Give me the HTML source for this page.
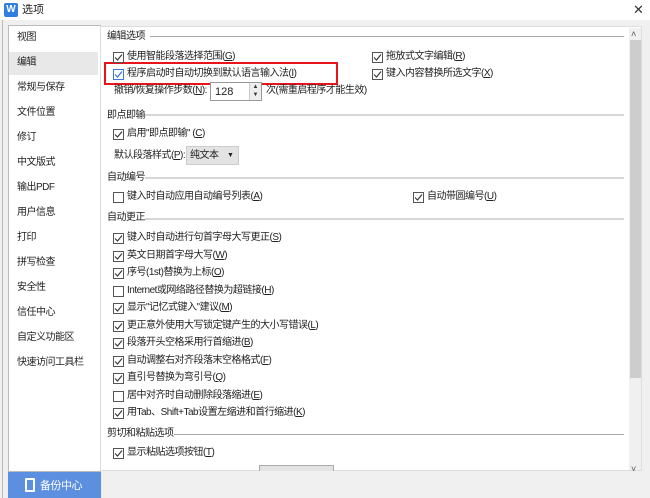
<!DOCTYPE html>
<html><head><meta charset="utf-8"><style>
*{margin:0;padding:0;box-sizing:border-box}
body{width:650px;height:498px;overflow:hidden;background:#f0f0f0;font-family:"Liberation Sans","Noto Sans CJK SC",sans-serif;font-size:10px;letter-spacing:-0.5px;color:#222;position:relative}
.a{position:absolute;white-space:nowrap;line-height:14px}
.cb{position:absolute;width:11px;height:11px;border:1px solid #555;background:#fff}
.cb svg{position:absolute;left:0;top:0}
.hl{position:absolute;height:2px;background:#d6d6d6}
</style></head><body>
<div style="position:absolute;left:0;top:0;width:650px;height:20px;background:#fff"></div>
<div style="position:absolute;left:4px;top:3px;width:14px;height:14px;background:#2f7fe0;border-radius:2px;color:#fff;font-size:10px;font-weight:bold;text-align:center;line-height:14px;letter-spacing:0">W</div>
<div class="a" style="left:22px;top:3px;font-size:11px;letter-spacing:0">选项</div>
<div class="a" style="left:633px;top:3px;font-size:13px;color:#333;letter-spacing:0">✕</div>
<div style="position:absolute;left:2px;top:20px;width:1px;height:478px;background:#bbb"></div>
<div style="position:absolute;left:8px;top:25px;width:93px;height:447px;background:#fff;border:1px solid #bbb"></div>
<div style="position:absolute;left:9px;top:52px;width:89px;height:23px;background:#e8e8e8"></div>
<div class="a" style="left:17px;top:31px">视图</div>
<div class="a" style="left:17px;top:56px">编辑</div>
<div class="a" style="left:17px;top:81px">常规与保存</div>
<div class="a" style="left:17px;top:106px">文件位置</div>
<div class="a" style="left:17px;top:131px">修订</div>
<div class="a" style="left:17px;top:156px">中文版式</div>
<div class="a" style="left:17px;top:181px">输出PDF</div>
<div class="a" style="left:17px;top:206px">用户信息</div>
<div class="a" style="left:17px;top:231px">打印</div>
<div class="a" style="left:17px;top:256px">拼写检查</div>
<div class="a" style="left:17px;top:281px">安全性</div>
<div class="a" style="left:17px;top:306px">信任中心</div>
<div class="a" style="left:17px;top:331px">自定义功能区</div>
<div class="a" style="left:17px;top:356px">快速访问工具栏</div>
<div style="position:absolute;left:8px;top:472px;width:93px;height:26px;background:#5c8fe0"></div>
<div style="position:absolute;left:25px;top:478px;width:10px;height:14px;border:2px solid #fff;border-radius:1px"></div>
<div class="a" style="left:40px;top:479px;color:#fff;font-size:11px">备份中心</div>
<div style="position:absolute;left:100px;top:26px;width:542px;height:445px;background:#fff;border:1px solid #ddd"></div>
<div style="position:absolute;left:629px;top:28px;width:12px;height:442px;background:#f0f0f0"></div>
<div style="position:absolute;left:630px;top:40px;width:11px;height:338px;background:#cdcdcd"></div>
<div class="a" style="left:631px;top:27px;font-size:9px;color:#555">˄</div>
<div class="a" style="left:631px;top:462px;font-size:9px;color:#555">˅</div>
<div class="hl" style="left:150px;top:36px;width:474px;height:1px;background:#aaa"></div>
<div class="a" style="left:107px;top:30px">编辑选项</div>
<div class="hl" style="left:145px;top:114px;width:479px"></div>
<div class="a" style="left:107px;top:109px">即点即输</div>
<div class="hl" style="left:145px;top:177px;width:479px"></div>
<div class="a" style="left:107px;top:171px">自动编号</div>
<div class="hl" style="left:145px;top:218px;width:479px"></div>
<div class="a" style="left:107px;top:211px">自动更正</div>
<div class="hl" style="left:174px;top:434px;width:450px;height:1px;background:#aaa"></div>
<div class="a" style="left:107px;top:427px">剪切和粘贴选项</div>
<div style="position:absolute;left:104px;top:62px;width:234px;height:23px;border:2px solid #e8141a"></div>
<div class="a" style="left:114px;top:84px">撤销/恢复操作步数(<u>N</u>):</div>
<div style="position:absolute;left:210px;top:82px;width:52px;height:19px;border:1px solid #999;background:#fff"></div>
<div class="a" style="left:215px;top:85px;font-size:11px;letter-spacing:0">128</div>
<div style="position:absolute;left:249px;top:83px;width:12px;height:17px;background:#eee;border-left:1px solid #ccc;font-size:6px;line-height:8px;text-align:center;color:#333;letter-spacing:0">▲<br>▼</div>
<div class="a" style="left:266px;top:84px">次(需重启程序才能生效)</div>
<div class="a" style="left:114px;top:149px">默认段落样式(<u>P</u>):</div>
<div style="position:absolute;left:186px;top:146px;width:53px;height:19px;background:#e3e3e3;border:1px solid #ccc"></div>
<div class="a" style="left:190px;top:149px">纯文本</div>
<div class="a" style="left:227px;top:149px;font-size:7px">▼</div>
<div style="position:absolute;left:259px;top:465px;width:75px;height:6px;background:#e3e3e3;border:1px solid #aaa;border-bottom:none"></div>
<div id="cbs"></div>
<script>
var items=[
[113,57,1,"使用智能段落选择范围(<u>G</u>)"],
[113,74,1,"程序启动时自动切换到默认语言输入法(<u>I</u>)"],
[372,57,1,"拖放式文字编辑(<u>R</u>)"],
[372,74,1,"键入内容替换所选文字(<u>X</u>)"],
[113,134,1,"启用\"即点即输\" (<u>C</u>)"],
[113,197,0,"键入时自动应用自动编号列表(<u>A</u>)"],
[413,197,1,"自动带圆编号(<u>U</u>)"],
[113,238,1,"键入时自动进行句首字母大写更正(<u>S</u>)"],
[113,256,1,"英文日期首字母大写(<u>W</u>)"],
[113,273,1,"序号(1st)替换为上标(<u>O</u>)"],
[113,291,0,"Internet或网络路径替换为超链接(<u>H</u>)"],
[113,308,1,"显示\"记忆式键入\"建议(<u>M</u>)"],
[113,326,1,"更正意外使用大写锁定键产生的大小写错误(<u>L</u>)"],
[113,343,1,"段落开头空格采用行首缩进(<u>B</u>)"],
[113,361,1,"自动调整右对齐段落末空格格式(<u>F</u>)"],
[113,378,1,"直引号替换为弯引号(<u>Q</u>)"],
[113,396,0,"居中对齐时自动删除段落缩进(<u>E</u>)"],
[113,413,1,"用Tab、Shift+Tab设置左缩进和首行缩进(<u>K</u>)"],
[113,453,1,"显示粘贴选项按钮(<u>T</u>)"]];
var h="";
items.forEach(function(i){
var blue=(i[1]==74&&i[0]==113);
h+='<div class="cb" style="left:'+i[0]+'px;top:'+(i[1]-5)+'px;border-color:'+(blue?'#3a7bd5':'#555')+'">'+(i[2]?'<svg width="9" height="9" viewBox="0 0 9 9"><path d="M1 4.5 L3.5 7 L8 1.5" fill="none" stroke="'+(blue?'#2a6fd0':'#333')+'" stroke-width="1.1"/></svg>':'')+'</div>';
h+='<div class="a" style="left:'+(i[0]+14)+'px;top:'+(i[1]-7)+'px">'+i[3]+'</div>';
});
document.getElementById("cbs").innerHTML=h;
</script>
</body></html>
